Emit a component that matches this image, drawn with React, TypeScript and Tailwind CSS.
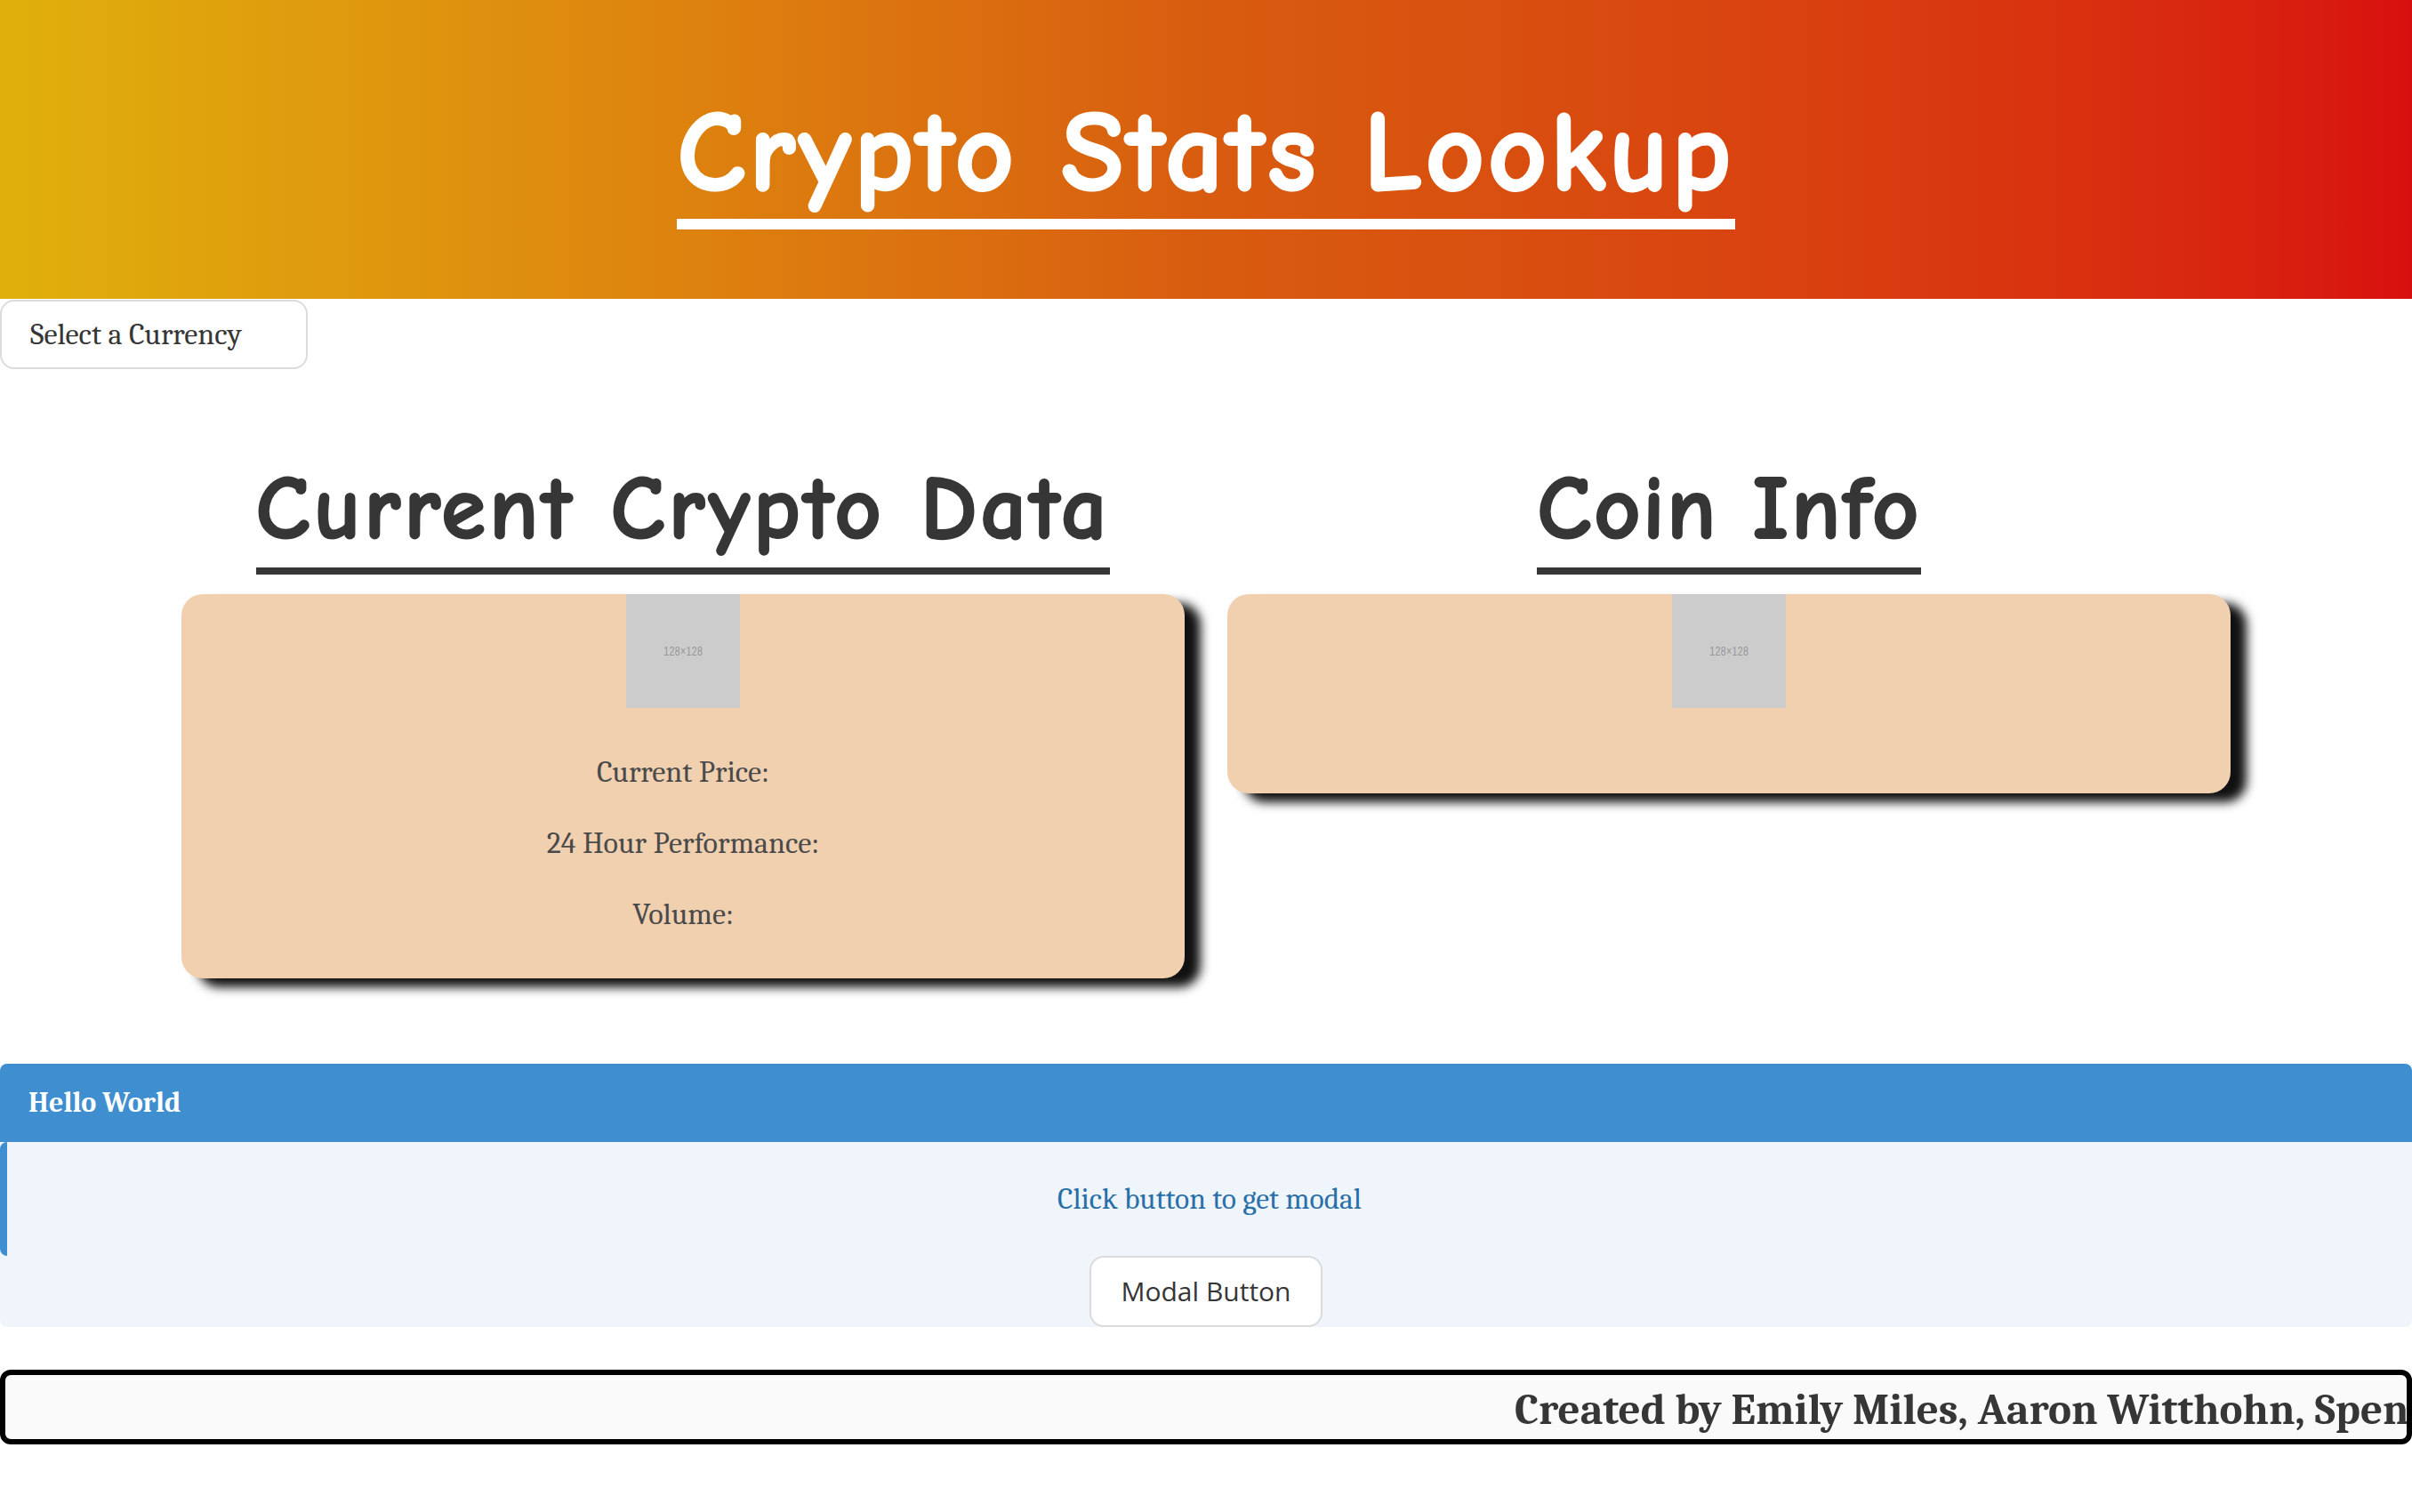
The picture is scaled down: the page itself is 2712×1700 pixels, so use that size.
const serif = "font-['Cambria','Caladea','Liberation_Serif',serif]";

function PlaceholderImage() {
  return (
    <div className="mx-auto flex h-[128px] w-[128px] items-center justify-center bg-[#cccccc]">
      <span className="scale-x-[0.75] font-['Liberation_Sans',sans-serif] text-[14px] tracking-[0.5px] text-[#969696]">
        128×128
      </span>
    </div>
  );
}

function Heading({ children, tracking }: { children: string; tracking: string }) {
  return (
    <div className="flex h-[172px] items-start justify-center">
      <h2
        className={`mt-[10px] border-b-[8px] border-[#363636] font-['Comic_Sans_MS','Comic_Neue',cursive] text-[102px] leading-[132px] font-bold text-[#363636] [-webkit-text-stroke:2px_#363636] ${tracking}`}
      >
        {children}
      </h2>
    </div>
  );
}

export default function App() {
  return (
    <div className={`${serif} min-h-[1700px] bg-white text-[34px] leading-[48px] text-[#4a4a4a]`}>
      <header className="flex h-[336px] items-start justify-center bg-gradient-to-r from-[#dfb00b] via-[#d85c0f] to-[#d80f0f]">
        <h1 className="mt-[98px] border-b-[12px] border-white font-['Comic_Sans_MS','Comic_Neue',cursive] text-[128px] leading-[148px] font-bold tracking-[4px] text-white [-webkit-text-stroke:3px_#ffffff]">
          Crypto Stats Lookup
        </h1>
      </header>

      <button className="mt-px flex h-[78px] w-[346px] items-center rounded-[16px] border-2 border-[#dbdbdb] bg-white pl-[32px] text-[#363636]">
        Select a Currency
      </button>

      <main className="mt-[81px] grid grid-cols-2 items-start gap-x-[48px] px-[204px]">
        <section>
          <Heading tracking="tracking-[3.8px]">Current Crypto Data</Heading>
          <div className="h-[432px] rounded-[24px] bg-[#f1d0b0] text-center shadow-[18px_10px_12px_#111111]">
            <PlaceholderImage />
            <div className="flex flex-col gap-[32px] pt-[48px]">
              <p>Current Price:</p>
              <p>24 Hour Performance:</p>
              <p>Volume:</p>
            </div>
          </div>
        </section>
        <section>
          <Heading tracking="tracking-[2.3px]">Coin Info</Heading>
          <div className="h-[224px] rounded-[24px] bg-[#f1d0b0] shadow-[18px_10px_12px_#111111]">
            <PlaceholderImage />
          </div>
        </section>
      </main>

      <article className="mt-[96px] h-[296px] rounded-[8px] bg-[#eff5fb]">
        <div className="flex h-[88px] items-center rounded-t-[8px] bg-[#3e8ed0] px-[32px] text-[32px] font-bold text-white">
          Hello World
        </div>
        <div className="flex h-[128px] items-center justify-center rounded-[8px] border-l-[8px] border-[#3e8ed0] text-[33.5px] text-[#296fa8]">
          Click button to get modal
        </div>
        <button className="mx-auto flex h-[80px] w-[262px] items-center justify-center rounded-[16px] border-2 border-[#dbdbdb] bg-white font-['Open_Sans',sans-serif] text-[30px] text-[#363636]">
          Modal Button
        </button>
      </article>

      <footer className="mt-[48px] flex h-[84px] items-center overflow-hidden rounded-[12px] border-[6px] border-black bg-[#fafafa] pt-[6px] pl-[1697px] text-[49px] font-bold whitespace-nowrap text-[#363636]">
        Created by Emily Miles, Aaron Witthohn, Spen
      </footer>
    </div>
  );
}
